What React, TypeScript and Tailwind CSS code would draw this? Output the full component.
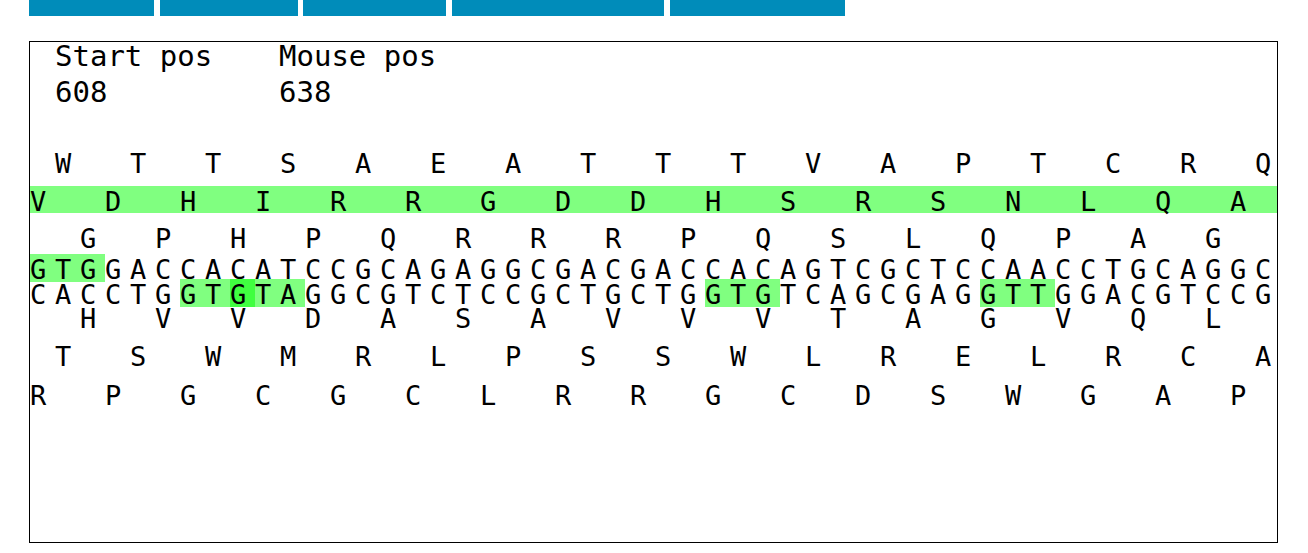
const N = 50;

const DNA_TOP = "GTGGACCACATCCGCAGAGGCGACGACCACAGTCGCTCCAACCTGCAGGC";
const DNA_BOTTOM = "CACCTGGTGTAGGCGTCTCCGCTGCTGGTGTCAGCGAGGTTGGACGTCCG";

// spread amino acid letters over the 50 nucleotide cells
const spread = (aa: string, offset: number) => {
  const cells: string[] = Array(N).fill("");
  aa.split(" ").forEach((c, i) => {
    const p = offset + 3 * i;
    if (p < N) cells[p] = c;
  });
  return cells;
};

const light = "bg-[#80ff80]";
const dark = "bg-[#40ff40]";

const topMarks: Record<number, string> = { 0: light, 1: light, 2: light };
const bottomMarks: Record<number, string> = {
  6: light,
  7: light,
  8: dark,
  9: light,
  10: light,
  27: light,
  28: light,
  29: light,
  38: light,
  39: light,
  40: light,
};

type RowProps = {
  cells: string[];
  className: string;
  marks?: Record<number, string>;
};

const Row = ({ cells, className, marks = {} }: RowProps) => (
  <div className={`flex items-start leading-[31px] ${className}`}>
    {cells.map((c, i) => (
      <span
        key={i}
        className={
          marks[i]
            ? `w-[25px] shrink-0 h-[28px] ${marks[i]}`
            : "w-[25px] shrink-0 h-full"
        }
      >
        {c}
      </span>
    ))}
  </div>
);

const buttons = [
  "w-[125px]",
  "w-[138px] ml-[6px]",
  "w-[143px] ml-[5px]",
  "w-[212px] ml-[6px]",
  "w-[175px] ml-[6px]",
];

const App = () => {
  return (
    <div className="w-[1308px] h-[553px] bg-white overflow-hidden font-['DejaVu_Sans_Mono',monospace] text-black">
      <div className="flex pl-[29px] h-4">
        {buttons.map((b, i) => (
          <div key={i} className={`h-4 bg-[#008cba] ${b}`} />
        ))}
      </div>

      <div className="ml-[29px] mt-[25px] w-[1249px] h-[502px] border border-black overflow-hidden">
        <div className="grid grid-cols-[224px_224px] pl-[25px] -mt-1 text-[29px] leading-9 whitespace-nowrap">
          <div>Start pos</div>
          <div>Mouse pos</div>
          <div>608</div>
          <div>638</div>
        </div>

        <div className="mt-[38px] text-[27px]">
          <Row cells={spread("W T T S A E A T T T V A P T C R Q", 1)} className="h-[38px]" />
          <Row
            cells={spread("V D H I R R G D D H S R S N L Q A", 0)}
            className={`h-[27px] mb-[10px] ${light}`}
          />
          <Row cells={spread("G P H P Q R R R P Q S L Q P A G", 2)} className="h-[31px]" />
          <Row cells={DNA_TOP.split("")} marks={topMarks} className="h-[25px]" />
          <Row cells={DNA_BOTTOM.split("")} marks={bottomMarks} className="h-[24px]" />
          <Row cells={spread("H V V D A S A V V V T A G V Q L", 2)} className="h-[38px]" />
          <Row cells={spread("T S W M R L P S S W L R E L R C A", 1)} className="h-[39px]" />
          <Row cells={spread("R P G C G C L R R G C D S W G A P", 0)} className="h-[39px]" />
        </div>
      </div>
    </div>
  );
};

export default App;
